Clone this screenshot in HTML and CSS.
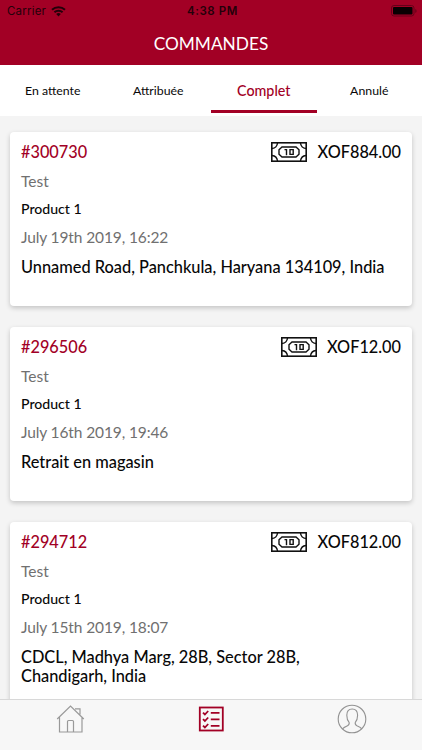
FILE: index.html
```html
<!DOCTYPE html>
<html lang="fr">
<head>
<meta charset="utf-8">
<title>Commandes</title>
<link rel="stylesheet" href="styles.css">
</head>
<body>
<svg class="defs" aria-hidden="true">
  <symbol id="cash" viewBox="0 0 36 20">
    <g fill="none" stroke="#111" stroke-width="1.4">
      <rect x=".8" y=".8" width="34.4" height="18.4" stroke-width="1.6"/>
      <path d="M1 6.500Q6 6 6.500 1M29.500 1q.5 5 5.500 5.500M1 13.500q5 .5 5.500 5.500M29.500 19q.5-5 5.500-5.500"/>
      <path d="M11 5h14l3 2.800v4.400L25 15H11l-3-2.800V7.800z"/>
      <path d="M13.500 7.600h2v5.600M19 7.600h3.200v4.800H19z" stroke-width="1.400"/>
    </g>
  </symbol>
</svg>
<div class="app">
  <header class="header">
    <div class="status">
      <div class="carrier"><span>Carrier</span>
        <svg width="15" height="11" viewBox="0 0 15 11"><path d="M1 3.800a9.300 9.300 0 0 1 13 0M3.400 6.300a5.900 5.900 0 0 1 8.200 0" fill="none" stroke="#24000a" stroke-width="2"/><path d="M5.200 8.100a3.200 3.200 0 0 1 4.600 0L7.500 10.500z" fill="#24000a"/></svg>
      </div>
      <div class="clock">4:38 PM</div>
      <div class="power"><svg width="26" height="12" viewBox="0 0 26 12"><rect x=".5" y=".5" width="22.500" height="10.500" rx="2.500" fill="none" stroke="#65001a"/><rect x="2" y="2" width="19.500" height="7.500" rx="1" fill="#080002"/><path d="M24.300 4v4q1.300-.7 1.300-2t-1.300-2" fill="#65001a"/></svg></div>
    </div>
    <h1>COMMANDES</h1>
  </header>
  <nav class="tabs">
    <a>En attente</a><a>Attribuée</a><a class="active">Complet</a><a>Annulé</a>
  </nav>
  <main class="orders">
    <article class="card">
      <div class="top"><span class="number">#300730</span><span class="total"><svg class="cash"><use href="#cash"/></svg>XOF884.00</span></div>
      <p class="muted customer">Test</p>
      <p class="product">Product 1</p>
      <p class="muted date">July 19th 2019, 16:22</p>
      <p class="address">Unnamed Road, Panchkula, Haryana 134109, India</p>
    </article>
    <article class="card">
      <div class="top"><span class="number">#296506</span><span class="total"><svg class="cash"><use href="#cash"/></svg>XOF12.00</span></div>
      <p class="muted customer">Test</p>
      <p class="product">Product 1</p>
      <p class="muted date">July 16th 2019, 19:46</p>
      <p class="address">Retrait en magasin</p>
    </article>
    <article class="card">
      <div class="top"><span class="number">#294712</span><span class="total"><svg class="cash"><use href="#cash"/></svg>XOF812.00</span></div>
      <p class="muted customer">Test</p>
      <p class="product">Product 1</p>
      <p class="muted date">July 15th 2019, 18:07</p>
      <p class="address">CDCL, Madhya Marg, 28B, Sector 28B,<br>Chandigarh, India</p>
    </article>
  </main>
  <nav class="bottom">
    <a><svg width="30" height="30" viewBox="0 0 30 30" fill="none" stroke="#999" stroke-width="1.200"><path d="M2.200 15 15.500 2l13.300 13M4.500 12.700V28H27V12.700M12.500 28V17.500q0-1 1-1h4q1 0 1 1V28M20 4.800h5v5.700"/></svg></a>
    <a><svg width="30" height="30" viewBox="0 0 30 30" fill="none" stroke="#a20025" stroke-width="1.800"><rect x="3.800" y="3.500" width="23" height="23" stroke-width="1.800"/><path d="m7 8.600 1.900 1.900 3.300-3.500M7 15.100l1.900 1.900 3.300-3.500M7 21.600l1.900 1.900 3.300-3.500M14.800 8.800h8.700M14.800 15.300h8.700M14.800 21.800h8.700"/></svg></a>
    <a><svg width="30" height="30" viewBox="0 0 30 30" fill="none" stroke="#929292" stroke-width="1.100"><circle cx="15" cy="15" r="13.800"/><path d="M5.500 25q.8-1.500 5-3.300 2.200-1 1.600-3.300c-1.800-2-2.300-4-2.300-7.200 0-4.500 2-6.200 5.400-6.200s5.400 1.700 5.400 6.200c0 3.200-.5 5.200-2.300 7.200q-.6 2.300 1.600 3.300 4 1.700 4.900 3.200"/></svg></a>
  </nav>
</div>
</body>
</html>
```
FILE: styles.css
```css
* { box-sizing: border-box; }
body { margin: 0; font-family: Lato, sans-serif; font-weight: 500; color: #080808; }
h1, p { margin: 0; }
.defs { position: absolute; width: 0; height: 0; }
.app { width: 422px; height: 750px; display: flex; flex-direction: column; overflow: hidden; background: #f4f4f4; }
.header { height: 65px; flex: none; background: #a20025; }
.status { height: 22px; display: grid; grid-template-columns: 1fr auto 1fr; align-items: center; padding: 0 5px 0 7px; font-family: Inter, sans-serif; font-size: 11.5px; color: #24000a; }
.carrier { display: flex; align-items: center; gap: 5px; font-weight: 400; letter-spacing: .2px; }
.clock { font-weight: 600; letter-spacing: .6px; padding-left: 1px; }
.power { display: flex; justify-content: flex-end; }
h1 { height: 43px; line-height: 43px; text-align: center; color: #fff; font-size: 17.3px; font-weight: 400; }
.tabs { height: 51px; flex: none; display: grid; grid-template-columns: repeat(4, 1fr); background: #fff; }
.tabs a { height: 48px; display: flex; align-items: center; justify-content: center; font-size: 12.3px; font-weight: 400; padding-top: 2px; }
.tabs .active { color: #a20025; font-size: 14.3px; font-weight: 500; border-bottom: 3px solid #a20025; padding-top: 5px; }
.orders { flex: 1; min-height: 0; overflow: hidden; padding: 16px 10px 0; }
.card { min-height: 174px; margin-bottom: 21px; padding: 10px 11px 20px; border-radius: 4px; background: #fff; box-shadow: 0 2px 5px rgba(0,0,0,.2); }
.top { height: 20px; display: flex; justify-content: space-between; align-items: center; font-size: 16.3px; line-height: 20px; }
.number { color: #a20025; }
.total { display: flex; align-items: center; gap: 10px; }
.cash { width: 36px; height: 20px; margin-top: -1px; }
.muted { color: #707070; font-weight: 400; }
.customer { font-size: 15.5px; line-height: 20px; margin-top: 9px; }
.product { font-size: 14.1px; line-height: 18px; margin-top: 9px; }
.date { font-size: 15.5px; letter-spacing: -.12px; line-height: 20px; margin-top: 9px; }
.address { font-size: 16.35px; line-height: 19px; margin-top: 10px; }
.bottom { height: 51px; flex: none; display: grid; grid-template-columns: repeat(3, 1fr); background: #f7f7f7; border-top: 1px solid #d8d8d8; }
.bottom a { display: flex; justify-content: center; padding-top: 4px; }
```
